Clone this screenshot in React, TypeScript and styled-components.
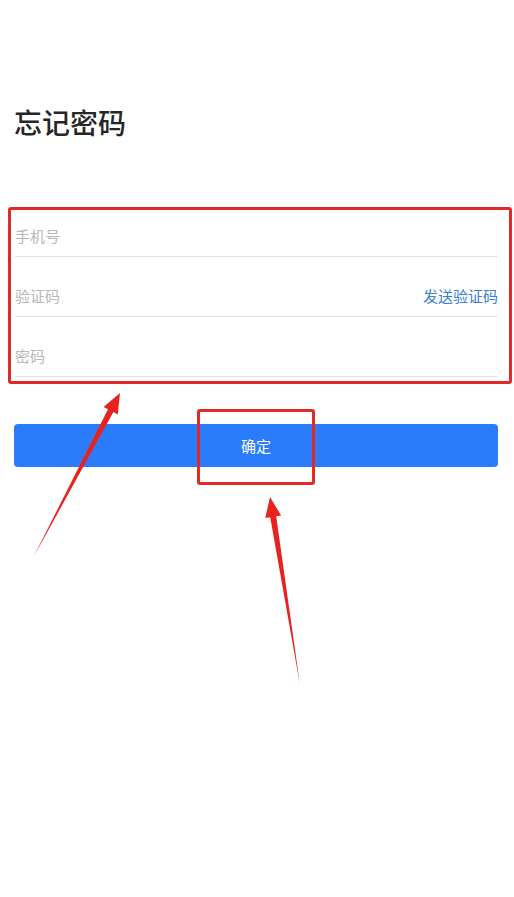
import React from 'react';
import styled, { createGlobalStyle } from 'styled-components';

const GlobalStyle = createGlobalStyle`
  html, body {
    margin: 0;
    padding: 0;
    background: #ffffff;
  }
  body {
    font-family: "Noto Sans CJK SC", "Noto Sans", sans-serif;
  }
`;

const Page = styled.div`
  position: relative;
  width: 514px;
  height: 897px;
  padding: 0 16px 0 14px;
  box-sizing: border-box;
  overflow: hidden;
`;

const Title = styled.h1`
  margin: 0;
  padding-top: 103px;
  font-size: 28px;
  line-height: 38px;
  font-weight: 500;
  color: #262626;
`;

const Form = styled.div`
  display: flex;
  flex-direction: column;
  margin-top: 56px;
  padding-left: 1px;
`;

const FieldRow = styled.div`
  display: flex;
  align-items: flex-end;
  justify-content: space-between;
  height: 60px;
  box-sizing: border-box;
  padding-bottom: 10px;
  border-bottom: 1px solid #e2e2e2;
`;

const Placeholder = styled.span`
  font-size: 15px;
  line-height: 20px;
  color: #b8b8b8;
`;

const SendCode = styled.span`
  font-size: 15px;
  line-height: 20px;
  color: #3a7fd6;
`;

const SubmitButton = styled.button`
  display: block;
  width: 100%;
  height: 43px;
  margin-top: 47px;
  border: none;
  border-radius: 4px;
  background: #2a7cfb;
  color: #ffffff;
  font-family: "Noto Sans CJK SC", "Noto Sans", sans-serif;
  font-size: 15px;
  cursor: pointer;
`;

const Highlight = styled.div<{ $left: number; $top: number; $width: number; $height: number }>`
  position: absolute;
  left: ${p => p.$left}px;
  top: ${p => p.$top}px;
  width: ${p => p.$width}px;
  height: ${p => p.$height}px;
  box-sizing: border-box;
  border: 3px solid #e02a26;
  border-radius: 3px;
  pointer-events: none;
`;

const ArrowLayer = styled.svg`
  position: absolute;
  left: 0;
  top: 0;
  pointer-events: none;
`;

export default function App() {
  return (
    <>
      <GlobalStyle />
      <Page>
        <Title>忘记密码</Title>
        <Form>
          <FieldRow>
            <Placeholder>手机号</Placeholder>
          </FieldRow>
          <FieldRow>
            <Placeholder>验证码</Placeholder>
            <SendCode>发送验证码</SendCode>
          </FieldRow>
          <FieldRow>
            <Placeholder>密码</Placeholder>
          </FieldRow>
        </Form>
        <SubmitButton>确定</SubmitButton>

        <Highlight $left={8} $top={207} $width={504} $height={177} />
        <Highlight $left={197} $top={409} $width={118} $height={76} />

        <ArrowLayer width="514" height="897" viewBox="0 0 514 897">
          <g fill="#e8231f">
            <polygon points="33,558 108,409.3 103.6,407 120,393 117.8,414.4 113.4,412.1" />
            <polygon points="300,685 276.2,516.2 281.1,515.4 270,497 265.3,518 270.2,517.2" />
          </g>
        </ArrowLayer>
      </Page>
    </>
  );
}
